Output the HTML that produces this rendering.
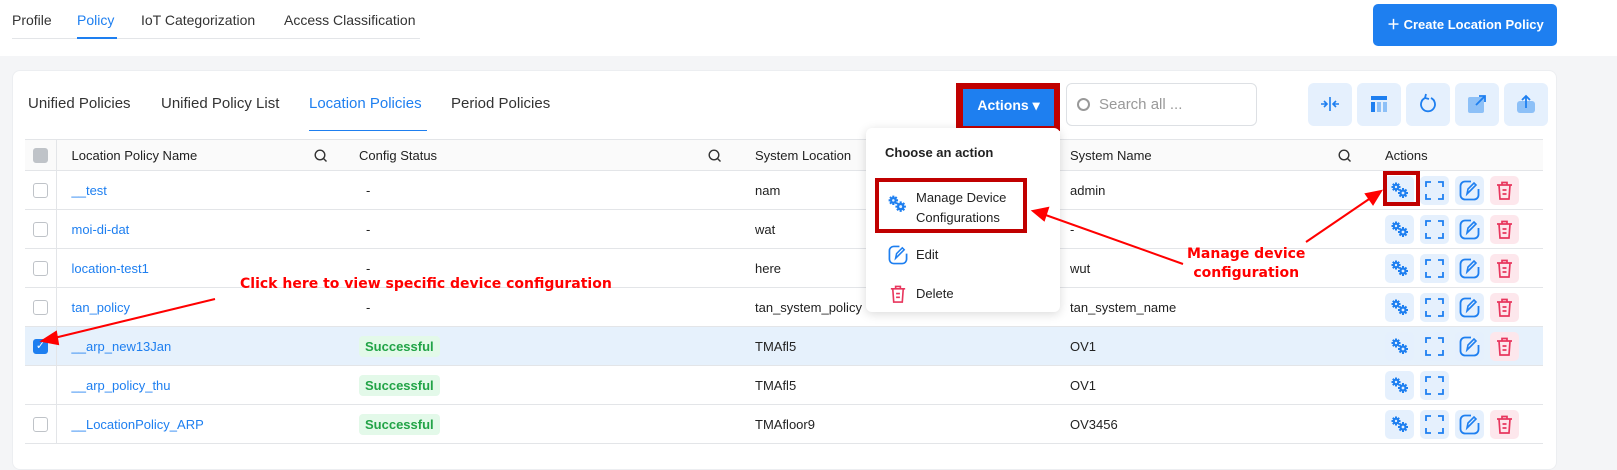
<!DOCTYPE html>
<html><head><meta charset="utf-8"><style>
*{box-sizing:border-box;margin:0;padding:0}
body{width:1617px;height:462px;overflow:hidden;background:#f4f5f7;font-family:"Liberation Sans",sans-serif;font-size:13px;color:#222;position:relative}
.top{position:absolute;left:0;top:0;width:1617px;height:56px;background:#fff}
.tt{position:absolute;top:12px;font-size:14px;color:#333}
.card{position:absolute;left:12px;top:70px;width:1545px;height:400px;background:#fff;border-radius:8px;border:1px solid #eceef1}
.tab{position:absolute;top:95px;font-size:15px;color:#333}
.ib{position:absolute;top:83px;width:44px;height:43px;background:#e5f0fd;border-radius:6px}
.ib svg{position:absolute;left:11px;top:10px}
table{position:absolute;left:25px;top:139px;width:1518px;border-collapse:collapse;border-top:1px solid #e3e5e8}
td{height:39px;border-bottom:1px solid #e3e5e8;padding:0;vertical-align:middle}
tr:first-child td{height:31px;background:#fafafa;font-size:13px;color:#222}
.cb{width:31px;border-right:1px solid #e3e5e8;padding-left:8px}
.box{width:15px;height:15px;border:1px solid #bfc3c8;border-radius:3px;background:#fff}
.lk{color:#1e7ff0;padding-left:15px}
.sel td{background:#e6f1fc}
.ok{display:inline-block;background:#e3f9e9;color:#22a447;font-weight:bold;padding:3px 6px;border-radius:4px;font-size:13px}
.acts span{display:inline-block;width:29px;height:29px;border-radius:5px;background:#e5f0fd;margin-right:6px;vertical-align:middle;position:relative}
.acts span.d{background:#fde7ec}
.acts svg{position:absolute;left:4px;top:4px}
.sq{float:right;margin-top:1px}
.red{color:#f00;font-weight:bold;position:absolute;font-size:14px;font-family:"DejaVu Sans",sans-serif}
</style></head><body>
<svg width="0" height="0" style="position:absolute">
<defs>
<symbol id="g" viewBox="0 0 21 21"><g fill="#1e7ff0"><circle cx="7" cy="7" r="3.2"/><circle cx="14" cy="13" r="3.6"/><g stroke="#1e7ff0" stroke-width="2"><path d="M7 2.5v9M2.5 7h9M3.8 3.8l6.4 6.4M10.2 3.8l-6.4 6.4"/><path d="M14 8v10M9 13h10M10.5 9.5l7 7M17.5 9.5l-7 7"/></g></g><circle cx="7" cy="7" r="1.2" fill="#e5f0fd"/><circle cx="14" cy="13" r="1.4" fill="#e5f0fd"/></symbol>
<symbol id="x" viewBox="0 0 21 21"><path d="M2 7V2h5M14 2h5v5M19 14v5h-5M7 19H2v-5" fill="none" stroke="#1e7ff0" stroke-width="1.8"/></symbol>
<symbol id="e" viewBox="0 0 21 21"><path d="M12 1.5H6A4.5 4.5 0 0 0 1.5 6v9A4.5 4.5 0 0 0 6 19.5h9a4.5 4.5 0 0 0 4.5-4.5V9" fill="none" stroke="#1e7ff0" stroke-width="1.8"/><path d="M8 14l1-5 6-6 2 2-6 6z" fill="none" stroke="#1e7ff0" stroke-width="1.6"/></symbol>
<symbol id="t" viewBox="0 0 21 21"><path d="M3 5h15M8 5V2.5h5V5M5 5l1 14h9l1-14M8.5 10h4M8.5 14h4" fill="none" stroke="#e8365d" stroke-width="1.7"/></symbol>
<symbol id="s" viewBox="0 0 14 14"><circle cx="6" cy="6" r="4.8" fill="none" stroke="#333" stroke-width="1.4"/><path d="M9.5 9.5l3 3" stroke="#333" stroke-width="1.4"/></symbol>
</defs></svg>
<div class="top"></div>
<div class="tt" style="left:12px">Profile</div>
<div class="tt" style="left:77px;color:#1e7ff0">Policy</div>
<div class="tt" style="left:141px">IoT Categorization</div>
<div class="tt" style="left:284px">Access Classification</div>
<div style="position:absolute;left:12px;top:38px;width:408px;height:1px;background:#e3e5e8"></div>
<div style="position:absolute;left:77px;top:37px;width:40px;height:2px;background:#1e7ff0"></div>
<div style="position:absolute;left:1373px;top:4px;width:184px;height:42px;background:#1e7ff0;border-radius:5px;color:#fff;font-weight:bold;font-size:13px;line-height:42px;padding-left:14px">＋ Create Location Policy</div>
<div class="card"></div>
<div class="tab" style="left:28px">Unified Policies</div>
<div class="tab" style="left:161px">Unified Policy List</div>
<div class="tab" style="left:309px;color:#1e7ff0">Location Policies</div>
<div class="tab" style="left:451px">Period Policies</div>
<div style="position:absolute;left:309px;top:130px;width:118px;height:1px;background:#1e7ff0"></div>
<div style="position:absolute;left:956px;top:83px;width:104px;height:48px;background:#c00000"></div>
<div style="position:absolute;left:963px;top:89px;width:91px;height:37px;background:#1e7ff0;color:#fff;font-weight:bold;font-size:14px;line-height:33px;text-align:center">Actions ▾</div>
<div style="position:absolute;left:1066px;top:83px;width:191px;height:43px;border:1px solid #dde0e4;border-radius:6px;color:#999;font-size:15px;line-height:41px;padding-left:32px">Search all ...<span style="position:absolute;left:10px;top:14px;width:13px;height:13px;border:2px solid #999;border-radius:50%"></span></div>
<div class="ib" style="left:1308px"><svg width="22" height="22" viewBox="0 0 22 22"><path d="M11 4v14M2 11h6M5 8l3 3-3 3M20 11h-6M17 8l-3 3 3 3" fill="none" stroke="#1e7ff0" stroke-width="1.6"/></svg></div>
<div class="ib" style="left:1357px"><svg width="22" height="22" viewBox="0 0 22 22"><rect x="3" y="3" width="16" height="4" fill="#1e7ff0"/><rect x="3" y="9" width="4" height="10" fill="#1e7ff0"/><rect x="9" y="9" width="4" height="10" fill="#8dc0f7"/><rect x="15" y="9" width="4" height="10" fill="#8dc0f7"/></svg></div>
<div class="ib" style="left:1406px"><svg width="22" height="22" viewBox="0 0 22 22"><path d="M8 5A7 7 0 1 0 14 5" fill="none" stroke="#1e7ff0" stroke-width="1.8"/><path d="M9 1l-1 4 4 1" fill="none" stroke="#1e7ff0" stroke-width="1.8"/></svg></div>
<div class="ib" style="left:1455px"><svg width="22" height="22" viewBox="0 0 22 22"><rect x="2" y="4" width="16" height="16" rx="2" fill="#8dc0f7"/><path d="M10 12L19 3M13 3h6v6" fill="none" stroke="#1e7ff0" stroke-width="1.8"/></svg></div>
<div class="ib" style="left:1504px"><svg width="22" height="22" viewBox="0 0 22 22"><rect x="2" y="8" width="18" height="12" rx="3" fill="#8dc0f7"/><path d="M11 15V3M7 7l4-4 4 4" fill="none" stroke="#1e7ff0" stroke-width="1.8"/></svg></div>
<table>
<tr><td class="cb"><div class="box" style="background:#bfc3c8"></div></td><td style="width:288px;padding-left:15px">Location Policy Name<svg class="sq" style="margin-right:16px" width="14" height="14"><use href="#s"/></svg></td><td style="width:396px;padding-left:15px">Config Status<svg class="sq" style="margin-right:18px" width="14" height="14"><use href="#s"/></svg></td><td style="width:315px;padding-left:15px">System Location</td><td style="width:315px;padding-left:15px">System Name<svg class="sq" style="margin-right:18px" width="14" height="14"><use href="#s"/></svg></td><td style="padding-left:15px">Actions</td></tr>
<tr><td class="cb"><div class="box"></div></td><td class="lk">__test</td><td style="padding-left:22px">-</td><td style="padding-left:15px">nam</td><td style="padding-left:15px">admin</td><td class="acts" style="padding-left:15px"><span><svg width="21" height="21"><use href="#g"/></svg></span><span><svg width="21" height="21"><use href="#x"/></svg></span><span><svg width="21" height="21"><use href="#e"/></svg></span><span class="d"><svg width="21" height="21"><use href="#t"/></svg></span></td></tr>
<tr><td class="cb"><div class="box"></div></td><td class="lk">moi-di-dat</td><td style="padding-left:22px">-</td><td style="padding-left:15px">wat</td><td style="padding-left:15px">-</td><td class="acts" style="padding-left:15px"><span><svg width="21" height="21"><use href="#g"/></svg></span><span><svg width="21" height="21"><use href="#x"/></svg></span><span><svg width="21" height="21"><use href="#e"/></svg></span><span class="d"><svg width="21" height="21"><use href="#t"/></svg></span></td></tr>
<tr><td class="cb"><div class="box"></div></td><td class="lk">location-test1</td><td style="padding-left:22px">-</td><td style="padding-left:15px">here</td><td style="padding-left:15px">wut</td><td class="acts" style="padding-left:15px"><span><svg width="21" height="21"><use href="#g"/></svg></span><span><svg width="21" height="21"><use href="#x"/></svg></span><span><svg width="21" height="21"><use href="#e"/></svg></span><span class="d"><svg width="21" height="21"><use href="#t"/></svg></span></td></tr>
<tr><td class="cb"><div class="box"></div></td><td class="lk">tan_policy</td><td style="padding-left:22px">-</td><td style="padding-left:15px">tan_system_policy</td><td style="padding-left:15px">tan_system_name</td><td class="acts" style="padding-left:15px"><span><svg width="21" height="21"><use href="#g"/></svg></span><span><svg width="21" height="21"><use href="#x"/></svg></span><span><svg width="21" height="21"><use href="#e"/></svg></span><span class="d"><svg width="21" height="21"><use href="#t"/></svg></span></td></tr>
<tr class="sel"><td class="cb"><div class="box" style="background:#1e7ff0;border-color:#1e7ff0;color:#fff;font-size:11px;line-height:13px;text-align:center">✓</div></td><td class="lk">__arp_new13Jan</td><td style="padding-left:15px"><span class="ok">Successful</span></td><td style="padding-left:15px">TMAfl5</td><td style="padding-left:15px">OV1</td><td class="acts" style="padding-left:15px"><span><svg width="21" height="21"><use href="#g"/></svg></span><span><svg width="21" height="21"><use href="#x"/></svg></span><span><svg width="21" height="21"><use href="#e"/></svg></span><span class="d"><svg width="21" height="21"><use href="#t"/></svg></span></td></tr>
<tr><td class="cb"></td><td class="lk">__arp_policy_thu</td><td style="padding-left:15px"><span class="ok">Successful</span></td><td style="padding-left:15px">TMAfl5</td><td style="padding-left:15px">OV1</td><td class="acts" style="padding-left:15px"><span><svg width="21" height="21"><use href="#g"/></svg></span><span><svg width="21" height="21"><use href="#x"/></svg></span></td></tr>
<tr><td class="cb"><div class="box"></div></td><td class="lk">__LocationPolicy_ARP</td><td style="padding-left:15px"><span class="ok">Successful</span></td><td style="padding-left:15px">TMAfloor9</td><td style="padding-left:15px">OV3456</td><td class="acts" style="padding-left:15px"><span><svg width="21" height="21"><use href="#g"/></svg></span><span><svg width="21" height="21"><use href="#x"/></svg></span><span><svg width="21" height="21"><use href="#e"/></svg></span><span class="d"><svg width="21" height="21"><use href="#t"/></svg></span></td></tr>
</table>
<div style="position:absolute;left:866px;top:128px;width:194px;height:184px;background:#fff;border-radius:6px;box-shadow:0 2px 10px rgba(0,0,0,.15)"></div>
<div style="position:absolute;left:885px;top:145px;font-weight:bold;font-size:13px">Choose an action</div>
<div style="position:absolute;left:875px;top:178px;width:152px;height:55px;border:4px solid #c00000"></div>
<div style="position:absolute;left:916px;top:188px;font-size:13px;line-height:20px">Manage Device<br>Configurations</div>
<svg style="position:absolute;left:886px;top:193px" width="22" height="22"><use href="#g"/></svg>
<svg style="position:absolute;left:888px;top:245px" width="20" height="20"><use href="#e"/></svg>
<div style="position:absolute;left:916px;top:247px">Edit</div>
<svg style="position:absolute;left:888px;top:284px" width="20" height="20"><use href="#t"/></svg>
<div style="position:absolute;left:916px;top:286px">Delete</div>
<div style="position:absolute;left:1383px;top:171px;width:37px;height:35px;border:4px solid #c00000"></div>
<div class="red" style="left:240px;top:276px">Click here to view specific device configuration</div>
<div class="red" style="left:1187px;top:245px;text-align:center;line-height:19px">Manage device<br>configuration</div>
<svg style="position:absolute;left:0;top:0" width="1617" height="462">
<g stroke="#f00" stroke-width="2" fill="#f00">
<line x1="215" y1="299" x2="50" y2="339"/><polygon points="42,341 56,332 58,344"/>
<line x1="1183" y1="264" x2="1040" y2="213"/><polygon points="1033,211 1048,208 1044,220"/>
<line x1="1306" y1="242" x2="1375" y2="195"/><polygon points="1381,191 1373,204 1366,194"/>
</g></svg>
</body></html>
